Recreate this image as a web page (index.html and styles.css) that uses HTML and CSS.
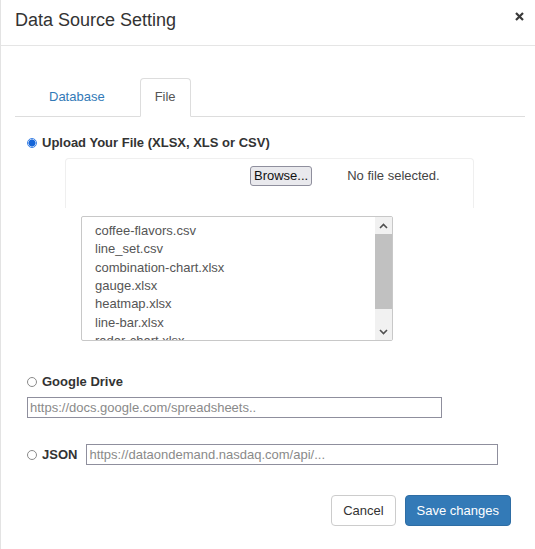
FILE: index.html
```html
<!DOCTYPE html>
<html>
<head>
<meta charset="utf-8">
<link rel="stylesheet" href="styles.css">
</head>
<body>
<div class="modal">
  <header class="modal-header">
    <h4 class="modal-title">Data Source Setting</h4>
    <span class="close"><svg width="9" height="9" viewBox="0 0 9 9"><path d="M1 1L8 8M8 1L1 8" stroke="#3a3a3a" stroke-width="2.2" fill="none"/></svg></span>
  </header>
  <div class="modal-body">
    <ul class="nav-tabs">
      <li class="tab">Database</li>
      <li class="tab active">File</li>
    </ul>
    <div class="tab-content">
      <div class="option"><span class="radio checked"></span>Upload Your File (XLSX, XLS or CSV)</div>
      <div class="well">
        <span class="browse">Browse...</span>
        <span class="nofile">No file selected.</span>
      </div>
      <div class="listbox">
        <div class="items">
          <div>coffee-flavors.csv</div>
          <div>line_set.csv</div>
          <div>combination-chart.xlsx</div>
          <div>gauge.xlsx</div>
          <div>heatmap.xlsx</div>
          <div>line-bar.xlsx</div>
          <div>radar-chart.xlsx</div>
        </div>
        <div class="scrollbar">
          <span class="arrow"><svg width="9" height="6" viewBox="0 0 9 6"><path d="M1 5L4.5 1.5L8 5" stroke="#505050" stroke-width="1.6" fill="none"/></svg></span>
          <span class="thumb"></span>
          <span class="track"></span>
          <span class="arrow"><svg width="9" height="6" viewBox="0 0 9 6"><path d="M1 1L4.5 4.5L8 1" stroke="#505050" stroke-width="1.6" fill="none"/></svg></span>
        </div>
      </div>
      <div class="option gdrive"><span class="radio"></span>Google Drive</div>
      <input class="text-input gd-input" type="text" placeholder="https://docs.google.com/spreadsheets..">
      <div class="option json-row"><span class="radio"></span>JSON<input class="text-input json-input" type="text" placeholder="https://dataondemand.nasdaq.com/api/..."></div>
    </div>
  </div>
  <div class="modal-footer">
    <button class="btn btn-default">Cancel</button>
    <button class="btn btn-primary">Save changes</button>
  </div>
</div>
</body>
</html>
```
FILE: styles.css
```css
html, body {
  margin: 0;
  padding: 0;
  background: #fff;
}
body {
  font-family: "Liberation Sans", Arial, sans-serif;
  font-size: 13px;
  color: #333;
}
.modal {
  border-left: 1px solid #e3e3e3;
  height: 549px;
  box-sizing: border-box;
}
.modal-header {
  height: 46px;
  box-sizing: border-box;
  border-bottom: 1px solid #e5e5e5;
  display: flex;
  justify-content: space-between;
  align-items: flex-start;
  padding: 10px 11px 0 14px;
}
.modal-title {
  margin: 0;
  font-size: 18px;
  font-weight: normal;
  line-height: normal;
  color: #333;
}
.close {
  display: block;
  margin-top: 2px;
  line-height: 0;
}
.modal-body {
  padding: 32px 10px 0 14px;
}
.nav-tabs {
  list-style: none;
  margin: 0;
  padding: 0 0 0 18px;
  display: flex;
  border-bottom: 1px solid #ddd;
}
.tab {
  padding: 9px 15px 10px;
  line-height: 18px;
  border: 1px solid transparent;
  border-radius: 4px 4px 0 0;
  margin-bottom: -1px;
  color: #337ab7;
  margin-right: 19px;
}
.tab.active {
  color: #555;
  background: #fff;
  border-color: #ddd #ddd transparent;
  padding: 9px 14px 10px;
}
.tab-content {
  padding-left: 12px;
}
.option {
  display: flex;
  align-items: center;
  font-weight: bold;
  line-height: 18px;
  color: #333;
}
.tab-content > .option:first-child {
  margin-top: 17px;
}
.radio {
  width: 10px;
  height: 10px;
  box-sizing: border-box;
  border-radius: 50%;
  border: 1px solid #8a8a8a;
  background: #fff;
  margin-right: 5px;
  flex: none;
}
.radio.checked {
  border-color: #3b82e6;
  background: radial-gradient(circle, #1565d8 0 3.2px, #dbe8fb 3.8px);
}
.well {
  margin: 6px 0 0 38px;
  width: 409px;
  height: 50px;
  box-sizing: border-box;
  border: 1px solid #efefef;
  border-bottom: none;
  border-radius: 4px 4px 0 0;
  padding: 7px 0 0 184px;
  display: flex;
  align-items: flex-start;
}
.browse {
  display: block;
  height: 20px;
  box-sizing: border-box;
  padding: 1px 3px;
  line-height: 16px;
  border: 1px solid #8f8f9d;
  border-radius: 3px;
  background: #e9e9ed;
  color: #111;
}
.nofile {
  margin-left: 35px;
  line-height: 20px;
  color: #444;
}
.listbox {
  position: relative;
  margin: 8px 0 0 54px;
  width: 312px;
  height: 125px;
  box-sizing: border-box;
  border: 1px solid #c8c8c8;
  border-radius: 2px;
  overflow: hidden;
}
.items {
  padding: 5px 0 0 13px;
  line-height: 18.33px;
  color: #555;
}
.scrollbar {
  position: absolute;
  top: 0;
  right: 0;
  bottom: 0;
  width: 17px;
  background: #f1f1f1;
  display: flex;
  flex-direction: column;
}
.arrow {
  height: 17px;
  display: flex;
  align-items: center;
  justify-content: center;
  flex: none;
}
.thumb {
  height: 75px;
  background: #c1c1c1;
  flex: none;
}
.track {
  flex: 1;
}
.gdrive {
  margin-top: 32px;
}
.text-input {
  display: block;
  height: 21px;
  box-sizing: border-box;
  border: 1px solid #8f8f9d;
  padding: 1px 2px;
  font-family: "Liberation Sans", Arial, sans-serif;
  font-size: 13px;
  color: #333;
  background: #fff;
  outline: none;
  border-radius: 0;
}
.text-input::placeholder {
  color: #8a8a8a;
}
.gd-input {
  margin-top: 6px;
  width: 415px;
}
.json-row {
  margin-top: 26px;
}
.json-input {
  margin-left: 9px;
  width: 412px;
}
.modal-footer {
  display: flex;
  justify-content: flex-end;
  gap: 9px;
  padding: 30px 24px 0 0;
}
.btn {
  font-family: "Liberation Sans", Arial, sans-serif;
  font-size: 13px;
  line-height: 17px;
  padding: 6px 11px;
  border: 1px solid #ccc;
  border-radius: 4px;
  background: #fff;
  color: #333;
  height: 31px;
  box-sizing: border-box;
}
.btn-primary {
  background: #337ab7;
  border-color: #2e6da4;
  color: #fff;
}
```
